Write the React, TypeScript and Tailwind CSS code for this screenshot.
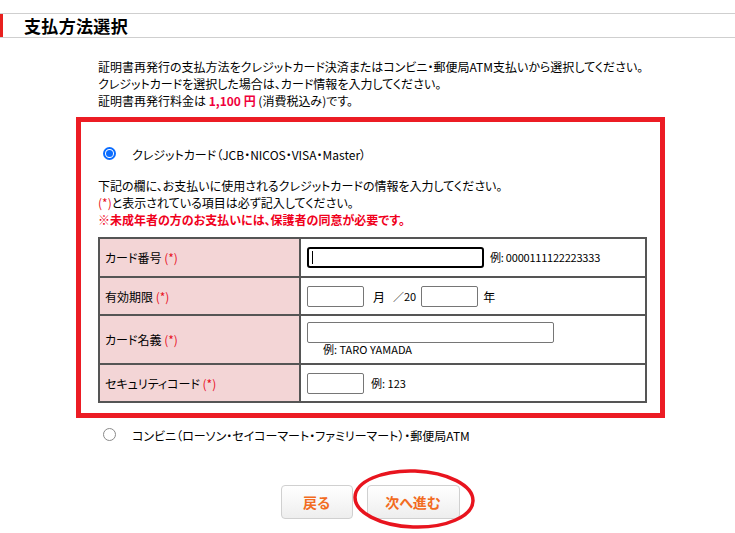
import React from "react";

const font = "font-['Noto_Sans_CJK_JP','Noto_Sans',sans-serif] [font-feature-settings:'palt']";

function Radio({ checked }: { checked?: boolean }) {
  if (checked) {
    return (
      <span className="flex h-[13px] w-[13px] items-center justify-center rounded-full border-2 border-[#0a6cff] bg-white">
        <span className="h-[7px] w-[7px] rounded-full bg-[#0a6cff]" />
      </span>
    );
  }
  return <span className="block h-[13px] w-[13px] rounded-full border border-[#8a8a8a] bg-white" />;
}

function Req() {
  return <span className="text-[#e8101e]"> (*)</span>;
}

export default function App() {
  return (
    <div className={`${font} w-[735px] h-[533px] bg-white text-[12px] leading-[17px] text-black overflow-hidden`}>
      <div className="h-[13px]" />
      <div className="border-y border-[#cfcfcf]">
        <div className="flex h-[23px] items-center border-l-[3px] border-[#e8201e] pl-[21px] text-[17px] font-bold tracking-[0.02em]">
          支払方法選択
        </div>
      </div>

      <div className="pl-[98px] pt-[20px]">
        <p>証明書再発行の支払方法をクレジットカード決済またはコンビニ・郵便局ATM支払いから選択してください。</p>
        <p>クレジットカードを選択した場合は、カード情報を入力してください。</p>
        <p>
          証明書再発行料金は <span className="font-bold text-[#f0003c]">1,100 円</span> (消費税込み)です。
        </p>
      </div>

      <div className="ml-[76px] mt-[8px] h-[301px] w-[589px] border-[5px] border-[#ec1c24] pl-[17px]">
        <div className="mt-[22px] flex items-center">
          <span className="ml-[5px]"><Radio checked /></span>
          <span className="ml-[16px] mt-[2px]">クレジットカード（JCB・NICOS・VISA・Master）</span>
        </div>
        <div className="mt-[14px]">
          <p>下記の欄に、お支払いに使用されるクレジットカードの情報を入力してください。</p>
          <p><span className="text-[#e8101e]">(*)</span>と表示されている項目は必ず記入してください。</p>
          <p className="font-bold text-[#f0001c]">※未成年者の方のお支払いには、保護者の同意が必要です。</p>
        </div>
        <table className="mt-[9px] w-[549px] border-collapse border-2 border-[#555]">
          <tbody>
            <tr className="h-[39px]">
              <td className="w-[201px] border-2 border-[#555] bg-[#f3d5d6] pl-[5px]">カード番号<Req /></td>
              <td className="border-2 border-[#555] pl-[6px]">
                <div className="flex items-center">
                  <div className="flex h-[21px] w-[177px] items-center rounded-[3px] border-2 border-black pl-[3px]">
                    <span className="h-[13px] w-px bg-black" />
                  </div>
                  <span className="ml-[6px] text-[11px] tracking-[-0.02em]">例: 0000111122223333</span>
                </div>
              </td>
            </tr>
            <tr className="h-[38px]">
              <td className="border-2 border-[#555] bg-[#f3d5d6] pl-[5px]">有効期限<Req /></td>
              <td className="border-2 border-[#555] pl-[6px]">
                <div className="flex items-center">
                  <div className="h-[21px] w-[57px] rounded-[2px] border border-[#767676]" />
                  <span className="ml-[9px]">月</span>
                  <span className="ml-[8px] text-[11px]">／20</span>
                  <div className="ml-[5px] h-[21px] w-[57px] rounded-[2px] border border-[#767676]" />
                  <span className="ml-[5px]">年</span>
                </div>
              </td>
            </tr>
            <tr className="h-[49px]">
              <td className="border-2 border-[#555] bg-[#f3d5d6] pl-[5px]">カード名義<Req /></td>
              <td className="border-2 border-[#555] pl-[6px]">
                <div className="h-[21px] w-[247px] rounded-[2px] border border-[#767676]" />
                <div className="ml-[16px] mt-[-1px] text-[11px] leading-[15px]">例: TARO YAMADA</div>
              </td>
            </tr>
            <tr className="h-[38px]">
              <td className="border-2 border-[#555] bg-[#f3d5d6] pl-[5px]">セキュリティコード<Req /></td>
              <td className="border-2 border-[#555] pl-[6px]">
                <div className="flex items-center">
                  <div className="h-[21px] w-[57px] rounded-[2px] border border-[#767676]" />
                  <span className="ml-[7px] text-[11px]">例: 123</span>
                </div>
              </td>
            </tr>
          </tbody>
        </table>
      </div>

      <div className="ml-[103px] mt-[7px] flex items-center">
        <Radio />
        <span className="ml-[16px] mt-[2px]">コンビニ（ローソン・セイコーマート・ファミリーマート）・郵便局ATM</span>
      </div>

      <div className="mt-[41px] flex justify-center gap-[14px] pl-[5px]">
        <button className="h-[34px] w-[72px] rounded-[4px] border border-[#d0d0d0] bg-gradient-to-b from-white to-[#eeeeee] text-[14px] font-bold text-[#f26b21]">
          戻る
        </button>
        <div className="relative">
          <button className="h-[34px] w-[93px] rounded-[4px] border border-[#d0d0d0] bg-gradient-to-b from-white to-[#eeeeee] text-[14px] font-bold text-[#f26b21]">
            次へ進む
          </button>
          <svg className="pointer-events-none absolute left-[-16px] top-[-17px]" width="126" height="64" viewBox="0 0 126 64">
            <ellipse cx="63" cy="31" rx="59" ry="28" fill="none" stroke="#e8141e" strokeWidth="3.5" transform="rotate(2 63 31)" />
          </svg>
        </div>
      </div>
    </div>
  );
}
